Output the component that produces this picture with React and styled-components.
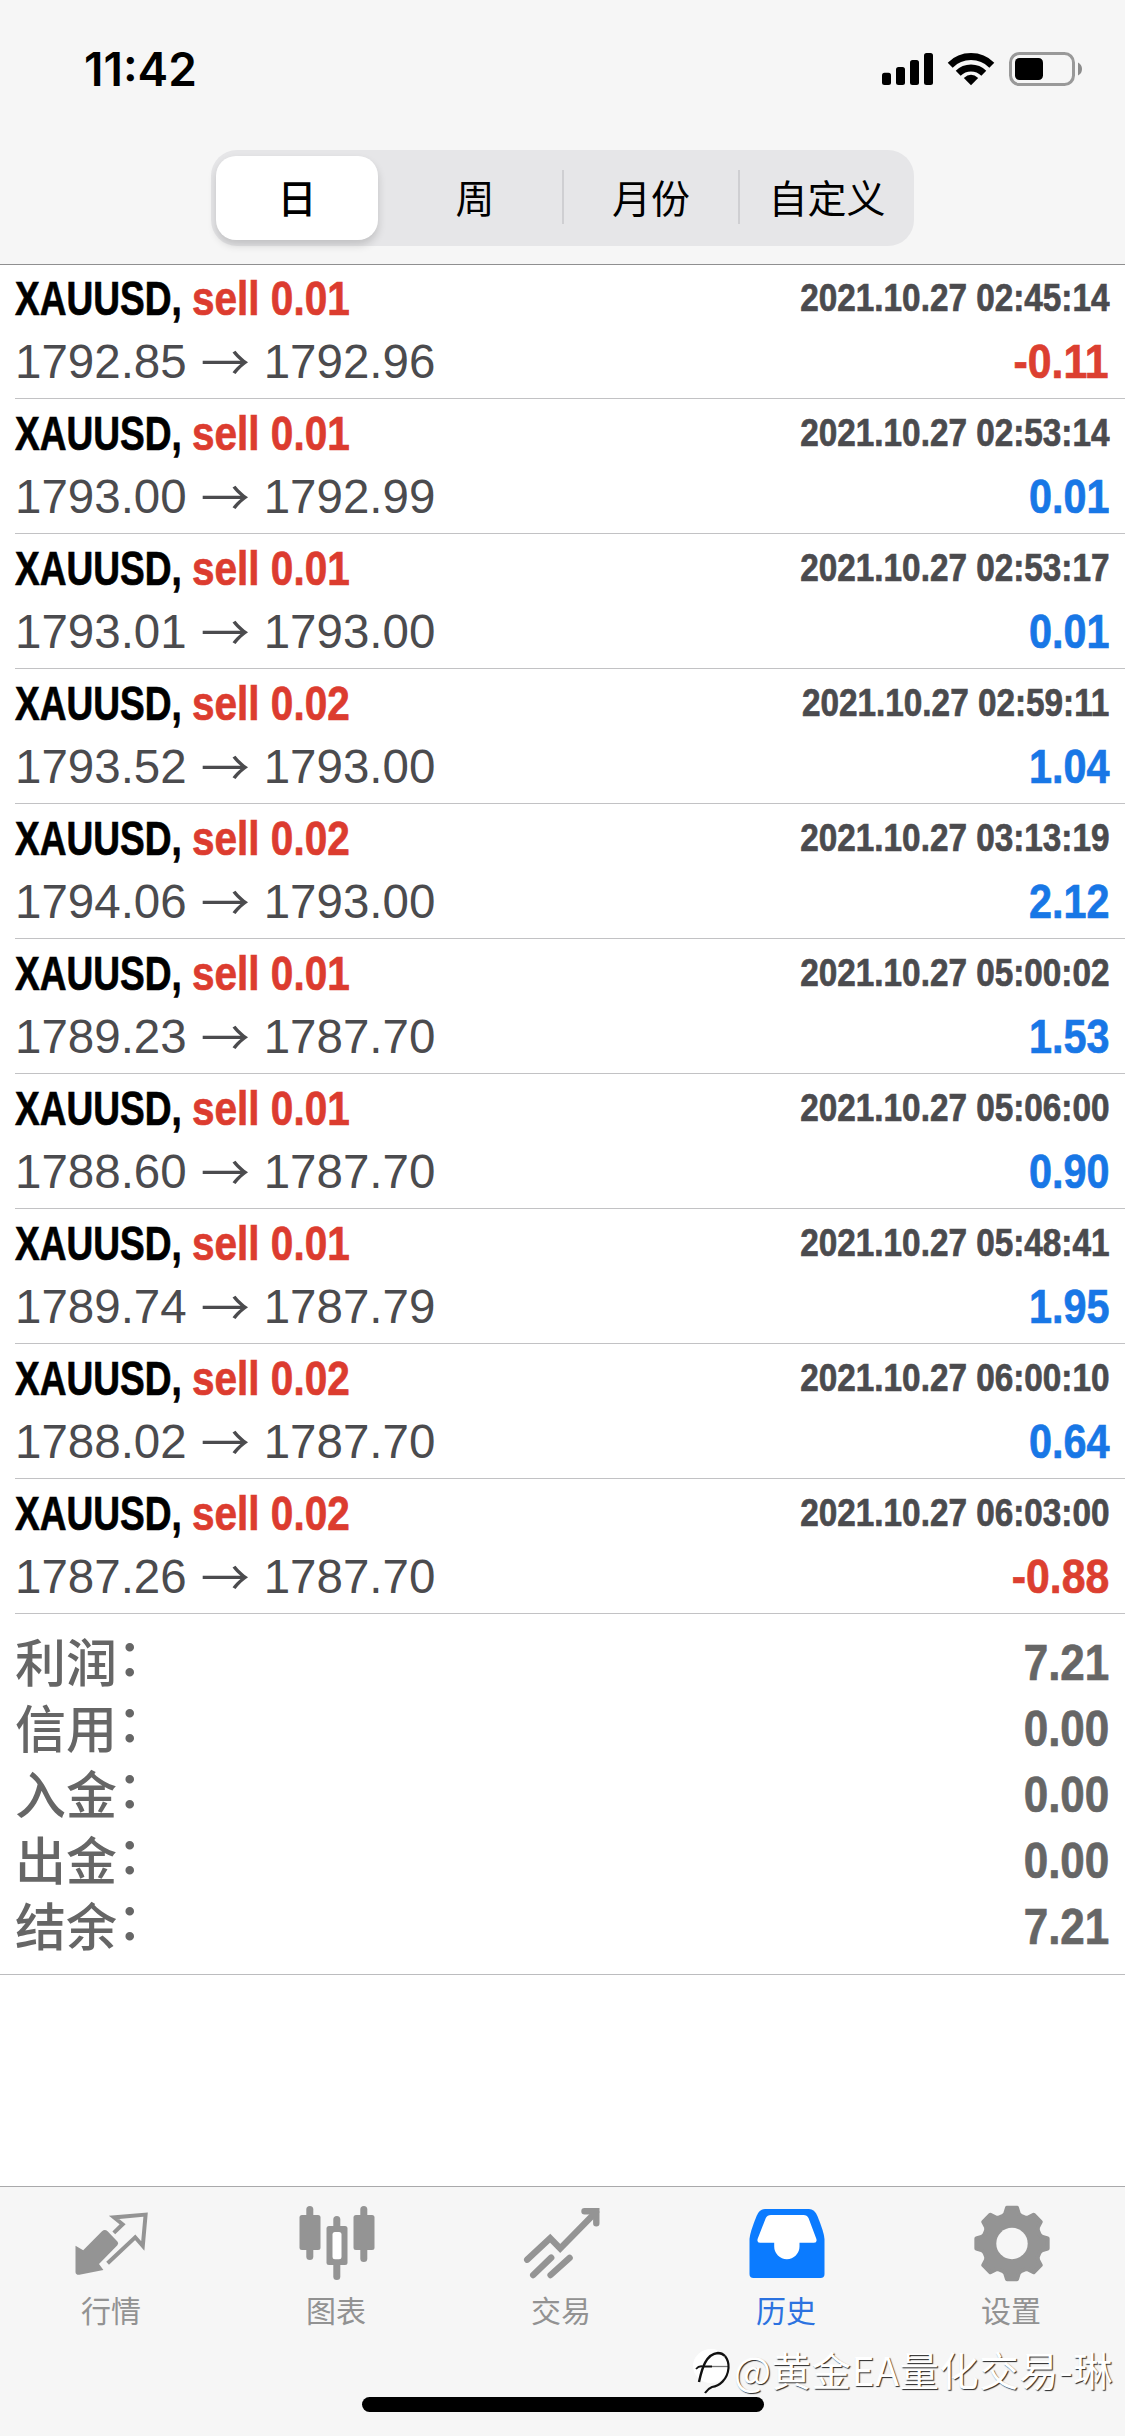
import React from 'react';
import styled, { createGlobalStyle } from 'styled-components';

const GlobalStyle = createGlobalStyle`
  body {
    margin: 0;
    background: #ffffff;
    font-family: "Liberation Sans", "Noto Sans CJK SC", sans-serif;
  }
`;

const Screen = styled.div`
  position: relative;
  display: flex;
  flex-direction: column;
  width: 1125px;
  height: 2436px;
  background: #ffffff;
  overflow: hidden;
`;

const Header = styled.header`
  height: 264px;
  background: #f6f6f6;
  box-shadow: 0 1px 0 #8f8f90;
`;

const StatusBar = styled.div`
  display: flex;
  justify-content: space-between;
  align-items: center;
  height: 150px;
  padding: 0 43px 12px 84px;
  box-sizing: border-box;
`;

const Clock = styled.span`
  font-family: Inter, sans-serif;
  font-size: 46px;
  font-weight: 600;
  line-height: 50px;
  color: #000000;
`;

const Segments = styled.div`
  display: flex;
  width: 703px;
  height: 96px;
  margin: 0 auto;
  padding: 6px 0 6px 5px;
  box-sizing: border-box;
  border-radius: 26px;
  background: #e6e6e8;
`;

const Segment = styled.button`
  flex: 1;
  display: flex;
  align-items: center;
  justify-content: center;
  margin: 0;
  padding: 0 0 4px;
  border: 0;
  border-radius: 20px;
  font-family: "Noto Sans CJK SC", sans-serif;
  font-size: 39px;
  font-weight: ${props => (props.$active ? 500 : 400)};
  color: #000000;
  background: ${props => (props.$active ? '#ffffff' : 'transparent')};
  box-shadow: ${props => (props.$active ? '0 5px 8px rgba(0, 0, 0, 0.16)' : 'none')};
  ${props => props.$active && 'flex: 0 0 162px; margin-right: 8px;'}
`;

const SegmentDivider = styled.div`
  width: 2px;
  height: 54px;
  margin: 14px 0;
  background: ${props => (props.$hidden ? 'transparent' : '#cfcfd2')};
`;

const DealRow = styled.div`
  height: 135px;
  margin-left: 15px;
  padding: 3px 16px 0 0;
  box-sizing: border-box;
  border-bottom: 1px solid #c2c2c4;
`;

const Line = styled.div`
  display: flex;
  justify-content: space-between;
  height: 63px;
  line-height: 63px;
  white-space: nowrap;
`;

// bold face squeezed horizontally, anchored to one side
const Condensed = styled.span`
  display: block;
  font-weight: 700;
  font-size: ${props => props.$size}px;
  line-height: ${props => props.$line || 63}px;
  color: ${props => props.$color || '#4b4b4e'};
  -webkit-text-stroke: 0.7px currentColor;
  transform: scaleX(${props => props.$ratio});
  transform-origin: ${props => props.$side || 'right'} center;
`;

const Title = styled.div`
  display: grid;
  grid-template-columns: 177px auto;
`;

const Prices = styled.span`
  display: flex;
  font-size: 47.5px;
  color: #4b4b4e;
`;

const Arrow = styled.span`
  width: 77px;
  text-align: center;
  font-family: "Noto Sans CJK SC", sans-serif;
  font-size: 49px;
  font-weight: 400;
  line-height: 59px;
`;

const Summary = styled.div`
  height: 361px;
  padding: 16px 16px 0 15px;
  box-sizing: border-box;
  border-bottom: 1px solid #bcbcbe;
`;

const SummaryRow = styled.div`
  display: flex;
  justify-content: space-between;
  height: 66px;
`;

const SummaryLabel = styled.span`
  display: flex;
  font-family: "Noto Sans CJK SC", sans-serif;
  font-size: 51px;
  font-weight: 500;
  line-height: 60px;
  color: #666666;
`;

const Colon = styled.span`
  line-height: 49px;
`;

const TabBar = styled.nav`
  display: flex;
  height: 250px;
  margin-top: auto;
  box-sizing: border-box;
  border-top: 1px solid #a9a9ab;
  background: #f6f6f6;
`;

const Tab = styled.div`
  flex: 1;
  display: flex;
  flex-direction: column;
  align-items: center;
  padding-top: 16px;
  color: ${props => (props.$active ? '#0b7bff' : '#949494')};
`;

const TabLabel = styled.span`
  margin: 4px 3px 0 0;
  font-family: "Noto Sans CJK SC", sans-serif;
  font-size: 30px;
  line-height: 44px;
  color: ${props => (props.$active ? '#2c72e0' : '#929292')};
`;

const HomeIndicator = styled.div`
  position: absolute;
  left: 362px;
  bottom: 24px;
  width: 402px;
  height: 15px;
  border-radius: 8px;
  background: #000000;
`;

const Watermark = styled.div`
  position: absolute;
  right: 12px;
  bottom: 39px;
  display: flex;
  align-items: center;
  font-family: "Noto Sans CJK SC", sans-serif;
  font-size: 39.5px;
  font-weight: 400;
  line-height: 56px;
  letter-spacing: 0.4px;
  white-space: nowrap;
  color: #ffffff;
  text-shadow: 1px 1px 1px rgba(0, 0, 0, 0.85);
`;

const StatusIcons = () => (
  <svg width="200" height="38" viewBox="882 50 200 38">
    <rect x="882" y="72.7" width="9" height="12.3" rx="2.5" />
    <rect x="896" y="67" width="9" height="18" rx="2.5" />
    <rect x="910" y="60" width="9" height="25" rx="2.5" />
    <rect x="924" y="53" width="9" height="32" rx="2.5" />
    <g fill="none" stroke="#000" strokeWidth="7">
      <path d="M950.2 65.2A29.5 29.5 0 0 1 991.8 65.2" />
      <path d="M958.2 73.2A18.2 18.2 0 0 1 983.8 73.2" />
    </g>
    <path d="M971 85.2L963.8 78Q971 71.6 978.2 78Z" />
    <rect x="1010.5" y="53.5" width="63" height="31" rx="9" fill="none" stroke="#999" strokeWidth="3" />
    <rect x="1015" y="58" width="28" height="22" rx="4.5" />
    <path d="M1078 62.5Q1082 64.5 1082 69T1078 75.5Z" fill="#8c8c8c" />
  </svg>
);

const QuotesIcon = () => (
  <svg width="80" height="80" viewBox="0 0 80 80" fill="currentColor">
    <path d="M2.5 42.7L10.2 47.2L29 28.2Q31.8 25.8 34.6 28.2L44.4 38.6Q46 40.4 44.4 42.2L26 61L30.4 67L6.4 71.8Q2.5 72 2.5 69Z" />
    <path
      d="M34.6 60.3L62.2 34.3L69.8 43L72.6 11.6L41 14.4L49.6 21.3L40.8 29.9"
      fill="none"
      stroke="currentColor"
      strokeWidth="4"
    />
  </svg>
);

const ChartsIcon = () => (
  <svg width="80" height="80" viewBox="0 0 80 80" fill="currentColor">
    <rect x="8.3" y="3" width="7" height="54" rx="3.5" />
    <rect x="1.5" y="12" width="21" height="35" rx="2.5" />
    <rect x="62.3" y="3" width="7" height="56" rx="3.5" />
    <rect x="55.5" y="12" width="21" height="35" rx="2.5" />
    <rect x="35.3" y="13" width="7" height="64" rx="3.5" />
    <rect x="28.5" y="23" width="21" height="39" rx="2.5" />
    <rect x="34.5" y="29" width="9" height="27.3" rx="2.5" fill="#fff" />
  </svg>
);

const TradeIcon = () => (
  <svg width="80" height="80" viewBox="0 0 80 80" fill="none" stroke="currentColor" strokeWidth="6.4" strokeLinecap="round">
    <path d="M4.2 56.7L27.2 35.2L37.2 45.4L73 9" />
    <path d="M61.5 8.2H73.3V20.2" />
    <path d="M10.2 72L28.2 54.6M27.6 72L46.6 54.8" />
  </svg>
);

const HistoryIcon = () => (
  <svg width="80" height="80" viewBox="0 0 80 80" fill="currentColor">
    <path d="M1.5 36Q2 29 8.6 13Q11.5 6 17 6H61Q66.5 6 69.4 13Q76 29 76.5 36V71Q76.5 75 72.5 75H5.5Q1.5 75 1.5 71Z" />
    <path
      d="M23 12H55.5Q59 12 60.5 15L68.4 36Q69.3 39.7 66 39.7H51.5V43.5A12.65 12.65 0 0 1 26.2 43.5V39.7H12Q8.7 39.7 9.6 36L17.8 15Q19.2 12 23 12Z"
      fill="#fff"
    />
  </svg>
);

// eight teeth around the hub, three points up and three down for each
const gearPath = () => {
  const points = [];
  for (let i = 0; i < 8; i++) {
    [[-18, 29], [-13, 30.5], [-8, 36], [8, 36], [13, 30.5], [18, 29]].forEach(([offset, radius]) => {
      const angle = ((i * 45 + offset) * Math.PI) / 180;
      points.push(`${(39 + radius * Math.cos(angle)).toFixed(2)} ${(40.5 + radius * Math.sin(angle)).toFixed(2)}`);
    });
  }
  return `M${points.join('L')}Z`;
};

const SettingsIcon = () => (
  <svg width="80" height="80" viewBox="0 0 80 80" fill="currentColor">
    <path d={gearPath()} stroke="currentColor" strokeWidth="4" strokeLinejoin="round" />
    <circle cx="39" cy="40.5" r="15.7" fill="#f6f6f6" />
  </svg>
);

const WatermarkIcon = () => (
  <svg width="42" height="50" viewBox="0 0 42 50">
    <ellipse cx="19" cy="22" rx="18" ry="17" fill="#fff" />
    <path d="M7 38C10 24 14 10 26 9Q30 9 33 12" fill="none" stroke="#111" strokeWidth="2.4" />
    <path d="M4 25Q7 21.5 11 22.5H20" fill="none" stroke="#111" strokeWidth="1.8" />
    <path d="M20 22.5H36" fill="none" stroke="#777" strokeWidth="1.3" />
    <path d="M33 12Q37 17 36.5 24C35.5 36 27 42 20 43Q16 44.500 13 49" fill="none" stroke="#111" strokeWidth="2.2" />
  </svg>
);

const deals = [
  { volume: '0.01', open: '1792.85', close: '1792.96', time: '2021.10.27 02:45:14', profit: '-0.11' },
  { volume: '0.01', open: '1793.00', close: '1792.99', time: '2021.10.27 02:53:14', profit: '0.01' },
  { volume: '0.01', open: '1793.01', close: '1793.00', time: '2021.10.27 02:53:17', profit: '0.01' },
  { volume: '0.02', open: '1793.52', close: '1793.00', time: '2021.10.27 02:59:11', profit: '1.04' },
  { volume: '0.02', open: '1794.06', close: '1793.00', time: '2021.10.27 03:13:19', profit: '2.12' },
  { volume: '0.01', open: '1789.23', close: '1787.70', time: '2021.10.27 05:00:02', profit: '1.53' },
  { volume: '0.01', open: '1788.60', close: '1787.70', time: '2021.10.27 05:06:00', profit: '0.90' },
  { volume: '0.01', open: '1789.74', close: '1787.79', time: '2021.10.27 05:48:41', profit: '1.95' },
  { volume: '0.02', open: '1788.02', close: '1787.70', time: '2021.10.27 06:00:10', profit: '0.64' },
  { volume: '0.02', open: '1787.26', close: '1787.70', time: '2021.10.27 06:03:00', profit: '-0.88' },
];

const totals = [
  ['利润', '7.21'],
  ['信用', '0.00'],
  ['入金', '0.00'],
  ['出金', '0.00'],
  ['结余', '7.21'],
];

const periods = ['日', '周', '月份', '自定义'];

const tabs = [
  { label: '行情', icon: QuotesIcon },
  { label: '图表', icon: ChartsIcon },
  { label: '交易', icon: TradeIcon },
  { label: '历史', icon: HistoryIcon, active: true },
  { label: '设置', icon: SettingsIcon },
];

const Deal = (props) => {

  const {
    volume,
    open,
    close,
    time,
    profit,
  } = props.item;

  const isLoss = profit.startsWith('-');

  return(
    <DealRow>
      <Line>
        <Title>
          <Condensed $size={47.5} $ratio={0.78} $side="left" $color="#000000">XAUUSD,</Condensed>
          <Condensed $size={47.5} $ratio={0.853} $side="left" $color="#dc3c2f">sell {volume}</Condensed>
        </Title>
        <Condensed $size={38.5} $line={61} $ratio={0.865}>{time}</Condensed>
      </Line>
      <Line>
        <Prices>
          <span>{open}</span>
          <Arrow>→</Arrow>
          <span>{close}</span>
        </Prices>
        <Condensed $size={47.5} $ratio={isLoss ? 0.9 : 0.87} $color={isLoss ? '#dc3f30' : '#1877e6'}>
          {profit}
        </Condensed>
      </Line>
    </DealRow>
)}

const App = () => (
  <Screen>
    <GlobalStyle />
    <Header>
      <StatusBar>
        <Clock>11:42</Clock>
        <StatusIcons />
      </StatusBar>
      <Segments>
        {periods.map((period, i) => (
          <React.Fragment key={period}>
            {i > 0 ? <SegmentDivider $hidden={i === 1} /> : null}
            <Segment $active={i === 0}>{period}</Segment>
          </React.Fragment>
        ))}
      </Segments>
    </Header>
    <main>
      {deals.map(deal => <Deal key={deal.time} item={deal} />)}
      <Summary>
        {totals.map(([label, value]) => (
          <SummaryRow key={label}>
            <SummaryLabel>{label}<Colon>：</Colon></SummaryLabel>
            <Condensed $size={50} $line={66} $ratio={0.88} $color="#666666">{value}</Condensed>
          </SummaryRow>
        ))}
      </Summary>
    </main>
    <TabBar>
      {tabs.map(({ label, icon: Icon, active }) => (
        <Tab key={label} $active={active}>
          <Icon />
          <TabLabel $active={active}>{label}</TabLabel>
        </Tab>
      ))}
    </TabBar>
    <HomeIndicator />
    <Watermark>
      <WatermarkIcon />
      @黄金EA量化交易-琳
    </Watermark>
  </Screen>
);

export default App;
